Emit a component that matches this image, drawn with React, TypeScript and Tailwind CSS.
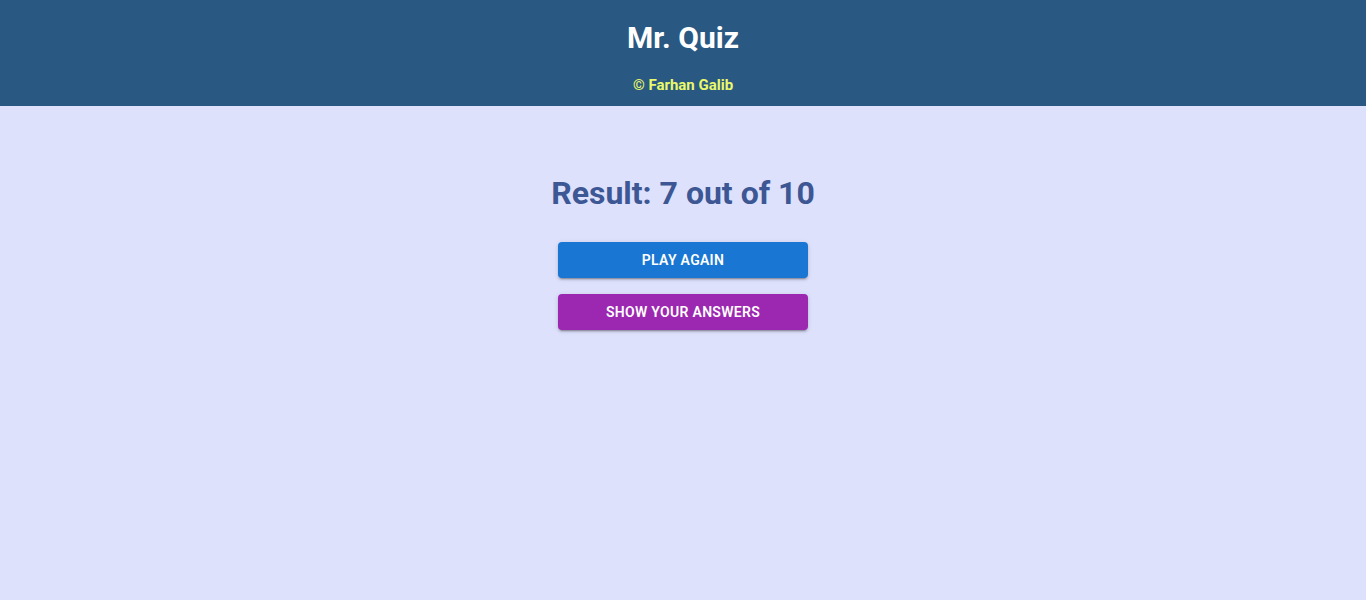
import React from "react";

const buttonShadow =
  "shadow-[0_3px_1px_-2px_rgba(0,0,0,0.2),0_2px_2px_0_rgba(0,0,0,0.14),0_1px_5px_0_rgba(0,0,0,0.12)]";

const App = () => {
  return (
    <div className="min-h-[600px] bg-[#dee1fc] font-['Roboto',sans-serif]">
      {/* Header */}
      <header className="h-[106px] bg-[#295883] flex flex-col items-center">
        <h1 className="mt-[19px] text-[30px] leading-[38px] font-bold text-white">Mr. Quiz</h1>
        <p className="mt-[18px] text-[15px] leading-[20px] font-bold text-[#e9f96a]">© Farhan Galib</p>
      </header>

      {/* Result */}
      <main className="flex flex-col items-center">
        <h2 className="mt-[66px] text-[32px] leading-[42px] font-bold text-[#3c5794]">
          Result: 7 out of 10
        </h2>
        <div className="mt-[28px] flex flex-col gap-4 w-[250px]">
          <button className={`h-9 rounded bg-[#1976d2] text-white text-[14px] font-semibold uppercase tracking-[0.3px] ${buttonShadow}`}>
            Play Again
          </button>
          <button className={`h-9 rounded bg-[#9c27b0] text-white text-[14px] font-semibold uppercase tracking-[0.3px] ${buttonShadow}`}>
            Show Your Answers
          </button>
        </div>
      </main>
    </div>
  );
};

export default App;
